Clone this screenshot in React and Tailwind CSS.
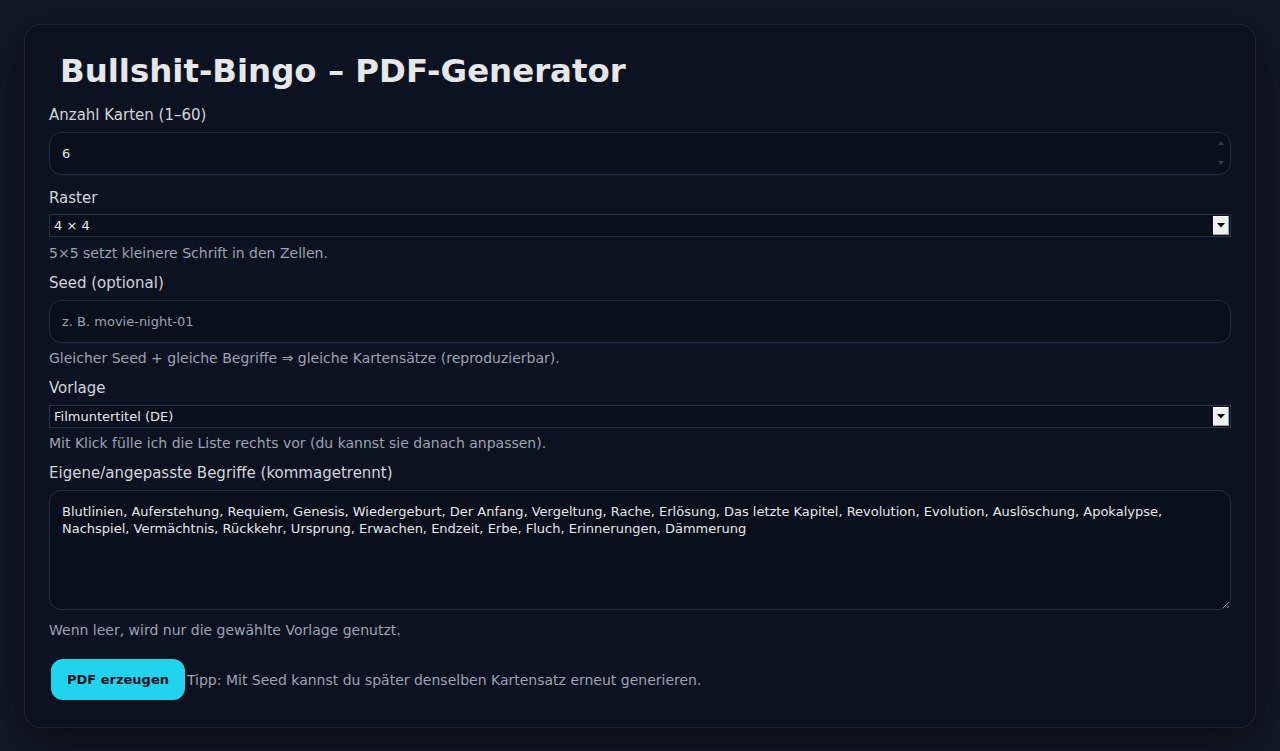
import React from "react";

const terms =
  "Blutlinien, Auferstehung, Requiem, Genesis, Wiedergeburt, Der Anfang, Vergeltung, Rache, Erlösung, Das letzte Kapitel, Revolution, Evolution, Auslöschung, Apokalypse, Nachspiel, Vermächtnis, Rückkehr, Ursprung, Erwachen, Endzeit, Erbe, Fluch, Erinnerungen, Dämmerung";

function SelectBox({ defaultValue, options, className }) {
  return (
    <div className={"relative " + className}>
      <select
        defaultValue={defaultValue}
        className="block h-[23px] w-full appearance-none border border-[#2a3345] bg-[#0a0f1c] pl-1 text-[13px] text-[#e5e7eb] outline-none"
      >
        {options.map((o) => (
          <option key={o.value} value={o.value}>
            {o.label}
          </option>
        ))}
      </select>
      <div className="pointer-events-none absolute right-[2px] top-[2px] flex h-[19px] w-[16px] items-center justify-center bg-[#efefef] shadow-[inset_-1px_-1px_0_#a0a0a0,inset_1px_1px_0_#ffffff]">
        <svg width="8" height="5" viewBox="0 0 8 5">
          <path d="M0 0 H8 L4 4.5 Z" fill="#000" />
        </svg>
      </div>
    </div>
  );
}

export default function App() {
  const font = { fontFamily: '"DejaVu Sans", Verdana, sans-serif' };
  return (
    <div className="min-h-screen bg-[#121826] p-6 text-[#e5e7eb]" style={font}>
      <div className="rounded-2xl border border-[#1e2636] bg-[#0d1221] px-6 pt-6 pb-[27px] shadow-[0_10px_40px_rgba(0,0,0,0.45)]">
        <h1 className="pl-[11px] text-[32.4px] font-bold leading-[44px] text-[#e5e7eb]">
          Bullshit-Bingo – PDF-Generator
        </h1>

        <label className="mt-[10px] block text-[15px] leading-6 text-[#d1d5db]">
          Anzahl Karten (1–60)
        </label>
        <div className="relative mt-[5px]">
          <input
            type="number"
            defaultValue={6}
            min={1}
            max={60}
            className="block h-[43px] w-full appearance-none rounded-xl border border-[#242d3f] bg-[#0a0f1c] px-3 text-[13px] text-[#e5e7eb] outline-none [&::-webkit-inner-spin-button]:appearance-none [&::-webkit-outer-spin-button]:appearance-none"
          />
          <div className="pointer-events-none absolute right-[7px] top-[9px] flex h-[24px] flex-col items-center justify-between">
            <svg width="6" height="4" viewBox="0 0 6 4">
              <path d="M0 4 L3 0 L6 4 Z" fill="#323c50" />
            </svg>
            <svg width="6" height="4" viewBox="0 0 6 4">
              <path d="M0 0 H6 L3 4 Z" fill="#323c50" />
            </svg>
          </div>
        </div>

        <label className="mt-[11px] block text-[15px] leading-6 text-[#d1d5db]">
          Raster
        </label>
        <SelectBox
          className="mt-[4px]"
          defaultValue="4"
          options={[
            { value: "3", label: "3 × 3" },
            { value: "4", label: "4 × 4" },
            { value: "5", label: "5 × 5" },
          ]}
        />
        <p className="mt-[6px] text-[14px] leading-5 text-[#9ca3af]">
          5×5 setzt kleinere Schrift in den Zellen.
        </p>

        <label className="mt-2 block text-[15px] leading-6 text-[#d1d5db]">
          Seed (optional)
        </label>
        <input
          type="text"
          placeholder="z. B. movie-night-01"
          className="mt-[5px] block h-[43px] w-full rounded-xl border border-[#242d3f] bg-[#0a0f1c] px-3 text-[13px] text-[#e5e7eb] outline-none placeholder:text-[#9ca3af]"
        />
        <p className="mt-[5px] text-[14px] leading-5 text-[#9ca3af]">
          Gleicher Seed + gleiche Begriffe ⇒ gleiche Kartensätze (reproduzierbar).
        </p>

        <label className="mt-2 block text-[15px] leading-6 text-[#d1d5db]">
          Vorlage
        </label>
        <SelectBox
          className="mt-[5px]"
          defaultValue="film"
          options={[
            { value: "film", label: "Filmuntertitel (DE)" },
            { value: "office", label: "Büro" },
          ]}
        />
        <p className="mt-[5px] text-[14px] leading-5 text-[#9ca3af]">
          Mit Klick fülle ich die Liste rechts vor (du kannst sie danach anpassen).
        </p>

        <label className="mt-2 block text-[15px] leading-6 text-[#d1d5db]">
          Eigene/angepasste Begriffe (kommagetrennt)
        </label>
        <textarea
          defaultValue={terms}
          className="mt-[5px] block h-[120px] w-full rounded-xl border border-[#242d3f] bg-[#0a0f1c] p-3 text-[13px] leading-[17px] text-[#e5e7eb] outline-none [color-scheme:dark]"
        />
        <p className="mt-[10px] text-[14px] leading-5 text-[#9ca3af]">
          Wenn leer, wird nur die gewählte Vorlage genutzt.
        </p>

        <div className="mt-[19px] flex items-center">
          <button className="ml-[2px] h-[41px] rounded-xl bg-[#22d3ee] px-4 text-[13px] font-bold text-[#0b1220]">
            PDF erzeugen
          </button>
          <span className="ml-[2px] text-[14px] leading-5 text-[#9ca3af]">
            Tipp: Mit Seed kannst du später denselben Kartensatz erneut generieren.
          </span>
        </div>
      </div>
    </div>
  );
}
